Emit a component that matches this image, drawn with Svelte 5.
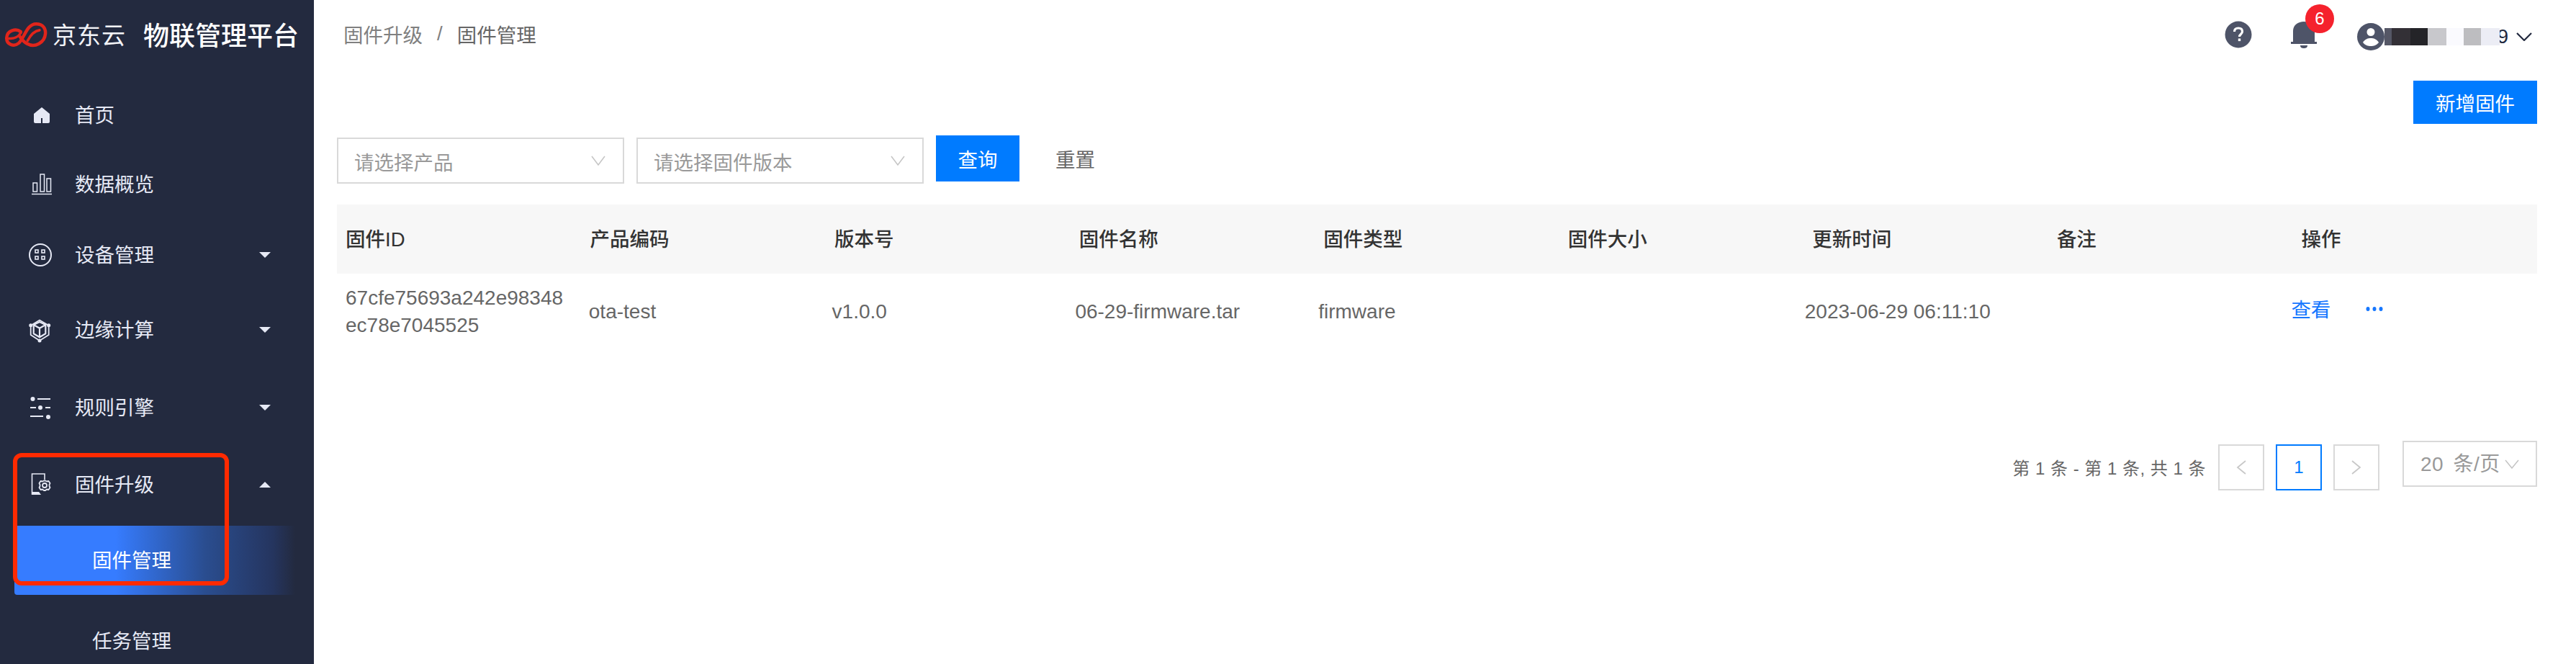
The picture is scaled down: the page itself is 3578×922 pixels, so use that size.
<script>
  const menu = [
    { label: '首页', icon: 'home', h: 96 },
    { label: '数据概览', icon: 'bars', h: 96 },
    { label: '设备管理', icon: 'device', h: 100, caret: 'down' },
    { label: '边缘计算', icon: 'edge', h: 108, caret: 'down' },
    { label: '规则引擎', icon: 'rules', h: 108, caret: 'down' },
    { label: '固件升级', icon: 'firmware', h: 106, caret: 'up' }
  ]
  const columns = ['固件ID', '产品编码', '版本号', '固件名称', '固件类型', '固件大小', '更新时间', '备注', '操作']
  const row = ['ota-test', 'v1.0.0', '06-29-firmware.tar', 'firmware', '', '2023-06-29 06:11:10', '']
</script>

<div class="page">
  <aside class="sidebar">
    <div class="brand">
      <svg class="logo" viewBox="18 22 186 115" width="60" height="37" fill="none" stroke="#e1251b" stroke-width="14" stroke-linecap="round">
        <path d="M88 68 C70 55 30 60 28 95 C26 125 60 135 80 118 C105 95 115 35 155 35 C185 35 197 55 195 78 C192 115 150 140 115 120 C100 112 92 100 85 90" />
        <path d="M38 98 C60 100 80 90 90 72" stroke-width="11" />
        <path d="M118 108 C130 85 145 65 170 62" stroke-width="11" />
      </svg>
      <span class="jd">京东云</span>
      <span class="title">物联管理平台</span>
    </div>

    <nav>
      {#each menu as item}
        <div class="item" style:height="{item.h}px">
          <svg class="icon" viewBox="0 0 36 36" width="36" height="36" fill="none" stroke="#e6e9f5" stroke-width="2">
            {#if item.icon === 'home'}
              <path d="M20 7 L31 16 V27 a2 2 0 0 1 -2 2 H11 a2 2 0 0 1 -2 -2 V16 Z" fill="#e6e9f5" stroke="none" />
              <rect x="19" y="22" width="2" height="7" fill="#232a3f" stroke="none" />
            {:else if item.icon === 'bars'}
              <g stroke-width="1.500">
                <rect x="8" y="16" width="5.500" height="12" />
                <rect x="18" y="4" width="5.500" height="24" />
                <rect x="27" y="10" width="5.500" height="18" />
                <path d="M6 31.500 H34" />
              </g>
            {:else if item.icon === 'device'}
              <circle cx="18" cy="18" r="15" />
              <g stroke-width="1.600">
                <rect x="11" y="11" width="4" height="4" />
                <rect x="20" y="11" width="4" height="4" />
                <rect x="11" y="20" width="4" height="4" />
                <rect x="20" y="20" width="4" height="4" />
              </g>
            {:else if item.icon === 'edge'}
              <path d="M4.700 12 L17 4.500 L29.700 12 V25 L17 33 L4.700 25 Z" stroke-width="1.800" />
              <path d="M17 7 L25.300 11 V23.300 L17 28.300 L8.700 23.300 V11 Z M8.700 11 L17 15.700 L25.300 11 M17 15.700 V28.300" stroke-width="2.200" stroke-linejoin="round" />
              <circle cx="4.700" cy="11.700" r="2.500" fill="#e6e9f5" stroke="none" />
              <circle cx="29.700" cy="11.700" r="2.500" fill="#e6e9f5" stroke="none" />
              <circle cx="17" cy="33" r="2.500" fill="#e6e9f5" stroke="none" />
            {:else if item.icon === 'rules'}
              <g fill="#e6e9f5" stroke="none">
                <circle cx="7.500" cy="6" r="3" />
                <rect x="14" y="5" width="18" height="2" />
                <rect x="4" y="17" width="8" height="2" />
                <circle cx="18" cy="18" r="3" />
                <rect x="25" y="17" width="7" height="2" />
                <rect x="4" y="29" width="18" height="2" />
                <circle cx="29" cy="31" r="3" />
              </g>
            {:else if item.icon === 'firmware'}
              <path d="M16 31 H6.500 V3 H24 V11" stroke-width="1.600" />
              <path d="M6 28 H16 L19 32 H6 Z" fill="#e6e9f5" stroke="none" />
              <path d="M21 13.500 L23 12.500 H25 L27 13.500 L29.500 13 L31.500 16 L30.500 18 V20 L31.500 22 L29.500 25 L27 24.500 L25 26 H23 L21 24.500 L18.500 25 L16.500 22 L17.500 20 V18 L16.500 16 L18.500 13 Z" fill="#232a3f" stroke-width="1.800" stroke-linejoin="round" />
              <circle cx="24" cy="19" r="3" stroke-width="1.800" />
            {/if}
          </svg>
          <span class="label">{item.label}</span>
          {#if item.caret}
            <span class="caret" class:up={item.caret === 'up'}></span>
          {/if}
        </div>
      {/each}
      <div class="subitems">
        <div class="subitem active">固件管理</div>
        <div class="subitem">任务管理</div>
      </div>
    </nav>

    <div class="annotation"></div>
  </aside>

  <main>
    <header>
      <div class="crumbs">
        <span>固件升级</span>
        <span class="sep">/</span>
        <span class="current">固件管理</span>
      </div>
      <div class="tools">
        <svg class="help" viewBox="0 0 38 38" width="38" height="38">
          <circle cx="19" cy="19" r="18.500" fill="#4e5468" />
          <path d="M13.500 15 C13.500 11.500 16 10 19 10 C22.500 10 24.500 12 24.500 14.800 C24.500 18.500 20.500 18.500 20.500 22" fill="none" stroke="#fff" stroke-width="3.200" />
          <rect x="18.800" y="24.500" width="3.400" height="3.600" fill="#fff" />
        </svg>
        <div class="bell">
          <svg viewBox="0 0 36 38" width="36" height="38">
            <path d="M0 32 H36 V29 H33 V14 C33 6 26 1 18 1 C10 1 3 6 3 14 V29 H0 Z" fill="#4e5468" />
            <path d="M13 34 H23 C23 37 21 38 18 38 C15 38 13 37 13 34 Z" fill="#4e5468" />
          </svg>
          <span class="badge">6</span>
        </div>
        <div class="user">
          <svg viewBox="0 0 38 38" width="38" height="38">
            <circle cx="19" cy="19" r="19" fill="#4e5468" />
            <circle cx="19" cy="12.500" r="5.500" fill="#fff" />
            <path d="M8 27 C11 22 15 21 19 21 C23 21 27 22 30 27 C27 31 23 32 19 32 C15 32 11 31 8 27 Z" fill="#fff" />
          </svg>
          <div class="masked">
            <i style="width:10px;background:#555766"></i>
            <i style="width:26px;background:#333036"></i>
            <i style="width:24px;background:#242428"></i>
            <i style="width:26px;background:#c8c8cc"></i>
            <i style="width:24px;background:#fafafe"></i>
            <i style="width:24px;background:#bdbdc0"></i>
            <i style="width:26px;background:#ecedf5"></i>
          </div>
          <span class="nine">9</span>
          <svg class="chev" viewBox="0 0 22 12" width="22" height="12" fill="none" stroke="#232a3f" stroke-width="2.200">
            <path d="M1 1 L11 11 L21 1" />
          </svg>
        </div>
      </div>
    </header>

    <section class="content">
      <div class="actions"><button class="primary add">新增固件</button></div>

      <div class="filters">
        <div class="select">
          <span>请选择产品</span>
          <svg viewBox="0 0 20 14" width="20" height="14" fill="none" stroke="#c4c4c4" stroke-width="1.500"><path d="M1 1 L10 13 L19 1" /></svg>
        </div>
        <div class="select">
          <span>请选择固件版本</span>
          <svg viewBox="0 0 20 14" width="20" height="14" fill="none" stroke="#c4c4c4" stroke-width="1.500"><path d="M1 1 L10 13 L19 1" /></svg>
        </div>
        <button class="primary query">查询</button>
        <button class="reset">重置</button>
      </div>

      <div class="thead">
        {#each columns as col}
          <div class="th">{col}</div>
        {/each}
      </div>

      <div class="tbody">
        <div class="td id">67cfe75693a242e98348<br />ec78e7045525</div>
        {#each row as cell}
          <div class="td">{cell}</div>
        {/each}
        <div class="td ops">
          <span>查看</span>
          <svg viewBox="0 0 24 8" width="24" height="8" fill="#1677ff">
            <ellipse cx="3" cy="4" rx="2.500" ry="3" />
            <ellipse cx="12" cy="4" rx="2.500" ry="3" />
            <ellipse cx="21" cy="4" rx="2.500" ry="3" />
          </svg>
        </div>
      </div>

      <div class="pager">
        <span class="total">第 1 条 - 第 1 条, 共 1 条</span>
        <div class="pages">
          <div class="page-box">
            <svg viewBox="0 0 14 20" width="14" height="20" fill="none" stroke="#c8c8c8" stroke-width="1.800"><path d="M13 1 L2 10 L13 19" /></svg>
          </div>
          <div class="page-box current">1</div>
          <div class="page-box">
            <svg viewBox="0 0 14 20" width="14" height="20" fill="none" stroke="#c8c8c8" stroke-width="1.800"><path d="M1 1 L12 10 L1 19" /></svg>
          </div>
        </div>
        <div class="size">
          <span>20 条/页</span>
          <svg viewBox="0 0 20 13" width="20" height="13" fill="none" stroke="#c4c4c4" stroke-width="1.500"><path d="M1 1 L10 12 L19 1" /></svg>
        </div>
      </div>
    </section>
  </main>
</div>

<style>
  :global(body) {
    margin: 0;
    overflow: hidden;
    background: #fff;
  }

  .page {
    display: flex;
    width: 3578px;
    height: 922px;
    overflow: hidden;
    font-family: "Liberation Sans", "Noto Sans CJK SC", sans-serif;
    font-size: 28px;
    color: #666;
  }

  .sidebar {
    position: relative;
    flex: none;
    width: 436px;
    background: #232a3f;
    color: #e6e9f5;
  }

  .brand {
    display: flex;
    align-items: center;
    height: 96px;
    padding-left: 6px;
    box-sizing: border-box;
    padding-bottom: 2px;
  }

  .logo {
    flex: none;
  }

  .jd {
    margin-left: 7px;
    width: 126px;
    font-size: 33px;
    letter-spacing: 1px;
    color: #f2f3f7;
  }

  .title {
    font-size: 36px;
    font-weight: 500;
    color: #fff;
  }

  nav {
    padding-top: 16px;
  }

  .item {
    display: flex;
    align-items: center;
    padding: 0 60px 0 38px;
  }

  .icon {
    flex: none;
    margin-right: 30px;
  }

  .label {
    padding-bottom: 4px;
    font-size: 27.500px;
  }

  .caret {
    margin-left: auto;
    width: 0;
    height: 0;
    border-left: 8px solid transparent;
    border-right: 8px solid transparent;
    border-top: 8px solid #e6e9f5;
  }

  .caret.up {
    border-top: 0;
    border-bottom: 8px solid #e6e9f5;
  }

  .subitems {
    padding-top: 4px;
    margin-left: 20px;
  }

  .subitem {
    display: flex;
    align-items: center;
    width: 390px;
    height: 96px;
    padding-left: 108px;
    padding-bottom: 4px;
    box-sizing: border-box;
    font-size: 27.500px;
    margin-bottom: 16px;
  }

  .subitem.active {
    color: #fff;
    border-radius: 0 0 0 4px;
    background: linear-gradient(90deg, #367cff 0%, #367cff 36%, #2a4d8f 68%, #25355f 92%, #232a3f 100%);
  }

  .annotation {
    position: absolute;
    left: 18px;
    top: 629px;
    width: 300px;
    height: 184px;
    box-sizing: border-box;
    border: 6px solid #ff2a00;
    border-radius: 12px;
  }

  main {
    flex: 1;
    min-width: 0;
  }

  header {
    display: flex;
    align-items: center;
    justify-content: space-between;
    height: 96px;
    padding: 0 61px 0 41px;
    box-sizing: border-box;
  }

  .crumbs {
    display: flex;
    align-items: center;
    margin-bottom: 2px;
    font-size: 27.500px;
    color: #808080;
  }

  .sep {
    margin: 0 20px;
  }

  .current {
    color: #666;
  }

  .tools {
    display: flex;
    align-items: center;
  }

  .bell {
    position: relative;
    display: flex;
    margin-left: 54px;
  }

  .badge {
    position: absolute;
    left: 20px;
    top: -23px;
    width: 40px;
    height: 40px;
    border-radius: 50%;
    background: #f5222d;
    color: #fff;
    font-size: 24px;
    line-height: 40px;
    text-align: center;
  }

  .user {
    display: flex;
    align-items: center;
    margin-left: 56px;
    padding-top: 6px;
  }

  .masked {
    position: relative;
    z-index: 1;
    display: flex;
    height: 24px;
  }

  .masked i {
    display: block;
  }

  .nine {
    margin-left: -3.600px;
    font-size: 28px;
    color: #232a3f;
  }

  .chev {
    margin-left: 11px;
  }

  .content {
    padding: 16px 54px 0 32px;
  }

  .actions {
    display: flex;
    justify-content: flex-end;
  }

  button {
    border: 0;
    padding: 0;
    font: inherit;
    font-size: 27.500px;
  }

  .primary {
    background: #007bff;
    color: #fff;
  }

  .add {
    width: 172px;
    height: 60px;
  }

  .filters {
    display: flex;
    align-items: flex-start;
    gap: 17px;
    margin-top: 16px;
    height: 96px;
  }

  .select {
    display: flex;
    align-items: center;
    justify-content: space-between;
    width: 399px;
    height: 64px;
    margin-top: 3px;
    padding: 0 24px 0 22px;
    box-sizing: border-box;
    border: 2px solid #d9d9d9;
    color: #999;
    font-size: 27.500px;
  }

  .select span {
    padding-top: 2px;
  }

  .query {
    width: 116px;
    height: 64px;
  }

  .reset {
    width: 55px;
    height: 64px;
    margin-left: 33px;
    background: none;
    color: #666;
  }

  .thead {
    display: grid;
    grid-template-columns: repeat(9, 1fr);
    height: 96px;
    background: #f7f7f7;
  }

  .th {
    display: flex;
    align-items: center;
    padding-left: 12px;
    padding-bottom: 4px;
    font-weight: 500;
    font-size: 27.500px;
    color: #333;
  }

  .tbody {
    display: grid;
    grid-template-columns: repeat(9, 337.800px);
    height: 108px;
    align-items: center;
  }

  .td {
    padding-left: 12px;
    padding-bottom: 2px;
    line-height: 38px;
    white-space: nowrap;
  }

  .ops {
    display: flex;
    align-items: center;
    color: #1677ff;
    font-size: 27.500px;
    padding-bottom: 6px;
    gap: 49px;
  }

  .ops svg {
    margin-bottom: 4px;
  }

  .pager {
    display: flex;
    justify-content: flex-end;
    align-items: flex-start;
    margin-top: 124px;
  }

  .total {
    margin-top: 19px;
    font-size: 24px;
    letter-spacing: 0.500px;
  }

  .pages {
    display: flex;
    gap: 16px;
    margin: 0 32px 0 17px;
    padding-top: 5px;
  }

  .page-box {
    display: flex;
    align-items: center;
    justify-content: center;
    width: 64px;
    height: 64px;
    box-sizing: border-box;
    border: 2px solid #d9d9d9;
    font-size: 24px;
  }

  .page-box.current {
    border-color: #007bff;
    color: #007bff;
  }

  .size {
    display: flex;
    align-items: center;
    width: 187px;
    height: 64px;
    box-sizing: border-box;
    padding-left: 23px;
    border: 2px solid #d9d9d9;
    color: #999;
    font-size: 28px;
    gap: 6px;
  }

  .size span {
    padding-bottom: 4px;
    letter-spacing: 0.500px;
    word-spacing: 5px;
    white-space: nowrap;
  }
</style>
